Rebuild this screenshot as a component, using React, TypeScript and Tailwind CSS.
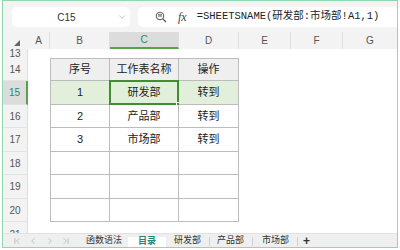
import React from "react";
import { ChevronDown, ChevronFirst, ChevronLast, ChevronLeft, ChevronRight } from "lucide-react";

const FONT = { fontFamily: '"Liberation Sans","Noto Sans CJK SC",sans-serif' };

const cols = [
  { k: "A", w: "w-[22px]" },
  { k: "B", w: "w-[60px]" },
  { k: "C", w: "w-[69px]" },
  { k: "D", w: "w-[60px]" },
  { k: "E", w: "w-[52px]" },
  { k: "F", w: "w-[52px]" },
];

const rows = [
  { n: 14, h: "h-[23px]", cells: ["序号", "工作表名称", "操作"], head: true },
  { n: 15, h: "h-[24px]", cells: ["1", "研发部", "转到"], sel: true },
  { n: 16, h: "h-[23px]", cells: ["2", "产品部", "转到"] },
  { n: 17, h: "h-[24px]", cells: ["3", "市场部", "转到"] },
  { n: 18, h: "h-[23px]", cells: ["", "", ""] },
  { n: 19, h: "h-[24px]", cells: ["", "", ""] },
  { n: 20, h: "h-[23px]", cells: ["", "", ""] },
];

function RowHeader({ n, h, active }: { n: number | string; h: string; active?: boolean }) {
  return (
    <div
      className={`w-[25px] shrink-0 ${h} flex items-center justify-center text-[10px] border-b border-[#e3e3e3] ${
        active
          ? "bg-[#dcdcdc] text-[#1d8a72] border-r-2 border-r-[#55a546]"
          : "bg-[#f3f3f3] text-[#555] border-r border-r-[#dedede]"
      }`}
    >
      {n}
    </div>
  );
}

export default function App() {
  return (
    <div className="w-[400px] h-[250px] bg-white pl-[2px]" style={FONT}>
      <div className="w-[396px] h-[248px] border border-[#8fd8ae] flex flex-col overflow-hidden">
        {/* toolbar */}
        <div className="h-[31px] shrink-0 bg-[#f4f4f4] flex items-start pt-[6px]">
          <div className="ml-[9px] w-[118px] h-[20px] bg-white rounded-[5px] flex items-center relative">
            <span className="flex-1 text-center text-[10px] text-[#333] pl-[4px]">C15</span>
            <ChevronDown size={10} strokeWidth={1.5} className="text-[#999] mr-[3px]" />
          </div>
          <div className="ml-[8px] flex-1 h-[20px] bg-white rounded-l-[5px] flex items-center">
            <svg width="12" height="12" viewBox="0 0 12 12" className="ml-[17px]">
              <circle cx="5" cy="5" r="3.8" fill="none" stroke="#555" strokeWidth="1" />
              <line x1="3" y1="5" x2="7" y2="5" stroke="#555" strokeWidth="1" />
              <line x1="3" y1="3.6" x2="7" y2="3.6" stroke="#555" strokeWidth="0.8" />
              <line x1="7.8" y1="7.8" x2="11" y2="11" stroke="#555" strokeWidth="1.2" />
            </svg>
            <span
              className="ml-[11px] text-[12px] italic text-[#444]"
              style={{ fontFamily: '"Liberation Serif",serif' }}
            >
              fx
            </span>
            <span
              className="ml-[10px] text-[10.5px] text-[#222] whitespace-nowrap"
              style={{ fontFamily: '"Liberation Mono","Noto Sans CJK SC",monospace' }}
            >
              =SHEETSNAME(研发部:市场部!A1,1)
            </span>
          </div>
        </div>

        {/* column headers */}
        <div className="h-[17px] shrink-0 flex bg-[#f3f3f3] text-[10px] text-[#555]">
          <div className="w-[25px] shrink-0 flex items-end justify-center pb-[3px]">
            <svg width="6" height="6" viewBox="0 0 6 6" className="ml-[2px]">
              <polygon points="6,0 6,6 0,6" fill="#666" />
            </svg>
          </div>
          {cols.map((c) => (
            <div
              key={c.k}
              className={`${c.w} shrink-0 flex items-center justify-center border-r border-[#dedede] ${
                c.k === "C" ? "bg-[#dcdcdc] text-[#1d8a72] border-b-2 border-b-[#55a546]" : ""
              }`}
            >
              {c.k}
            </div>
          ))}
          <div className="flex-1 flex items-center justify-center">G</div>
        </div>

        {/* row 13 partial */}
        <div className="h-[9px] shrink-0 flex">
          <div className="w-[25px] shrink-0 h-[9px] bg-[#f3f3f3] border-r border-[#dedede] text-[10px] text-[#555] leading-[9px] text-center overflow-hidden">
            13
          </div>
          <div className="flex-1 bg-white" />
        </div>

        {/* table rows */}
        {rows.map((r) => (
          <div key={r.n} className={`${r.h} shrink-0 flex`}>
            <RowHeader n={r.n} h={r.h} active={r.sel} />
            <div className="w-[22px] shrink-0 bg-white" />
            {r.cells.map((t, i) => {
              const w = i === 0 ? "w-[60px]" : i === 1 ? "w-[69px]" : "w-[60px]";
              const bg = r.head ? "bg-[#efefef]" : r.sel ? "bg-[#e2efda]" : "bg-white";
              return (
                <div
                  key={i}
                  className={`${w} shrink-0 relative flex items-center justify-center text-[11px] text-[#222] border-r border-b border-[#bcbcbc] ${bg} ${
                    i === 0 ? "border-l" : ""
                  } ${r.head ? "border-t" : ""}`}
                >
                  {t}
                  {r.sel && i === 1 && (
                    <>
                      <div className="absolute left-[-1px] top-[-1px] w-[70px] h-[72px] border border-[#5b8fd8] pointer-events-none" />
                      <div className="absolute left-[-1px] top-[-1px] w-[70px] h-[25px] border-2 border-[#3f8f2e] pointer-events-none" />
                      <div className="absolute right-[-3px] bottom-[-3px] w-[5px] h-[5px] bg-[#3f8f2e] border border-white" />
                    </>
                  )}
                </div>
              );
            })}
            <div className="flex-1 bg-white" />
          </div>
        ))}

        {/* row 21 partial */}
        <div className="h-[11px] shrink-0 flex">
          <div className="w-[25px] shrink-0 bg-[#f3f3f3] border-r border-[#dedede] text-[10px] text-[#555] leading-[26px] text-center overflow-hidden">
            21
          </div>
          <div className="flex-1 bg-white" />
        </div>

        {/* tab bar */}
        <div className="flex-1 bg-[#efefef] flex items-end text-[9px] text-[#333] border-t border-[#e2e2e2]">
          <div className="h-full flex items-center text-[#999] pl-[9px] gap-[5px]">
            <ChevronFirst size={10} strokeWidth={1.3} />
            <ChevronLeft size={10} strokeWidth={1.3} className="ml-[1px]" />
            <ChevronRight size={10} strokeWidth={1.3} className="ml-[2px]" />
            <ChevronLast size={10} strokeWidth={1.3} className="ml-[1px]" />
          </div>
          <div className="h-full flex items-center ml-[15px]">函数语法</div>
          <div className="h-[11px] ml-[6px] px-[10px] bg-white flex items-center text-[#1d8a72] font-bold">
            目录
          </div>
          <div className="h-full flex items-center ml-[8px]">研发部</div>
          <div className="h-[9px] w-px bg-[#d0d0d0] ml-[8px] mb-[2px]" />
          <div className="h-full flex items-center ml-[7px]">产品部</div>
          <div className="h-[9px] w-px bg-[#d0d0d0] ml-[8px] mb-[2px]" />
          <div className="h-full flex items-center ml-[9px]">市场部</div>
          <div className="h-[9px] w-px bg-[#d0d0d0] ml-[8px] mb-[2px]" />
          <div className="h-full flex items-center ml-[5px] text-[12px] font-bold leading-none">+</div>
        </div>
      </div>
    </div>
  );
}
